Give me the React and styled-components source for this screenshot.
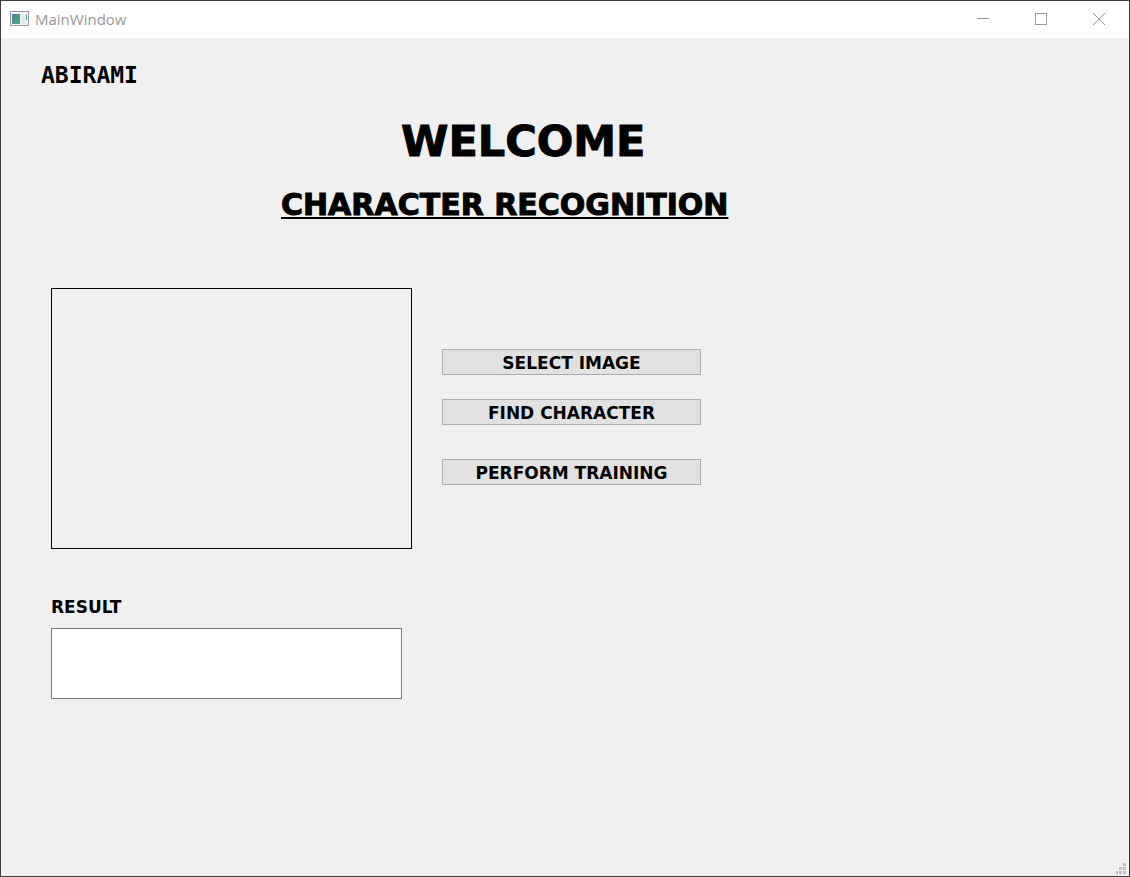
import React from "react";
import styled, { createGlobalStyle } from "styled-components";

const GlobalStyle = createGlobalStyle`
  *, *::before, *::after { box-sizing: border-box; }
  body { margin: 0; background: #f0f0f0; color: #000; }
`;

const heavy = `
  font-family: "Arial Black", "DejaVu Sans", sans-serif;
  font-weight: 900;
`;

const Window = styled.div`
  min-height: 100vh;
  display: flex;
  flex-direction: column;
  border: 1px solid #3f3d42;
  background: #f0f0f0;
`;

const TitleBar = styled.header`
  display: flex;
  align-items: center;
  height: 37px;
  padding: 0 1px 0 9px;
  background: #fff;
`;

const TitleText = styled.span`
  flex: 1;
  margin-left: 5px;
  padding-bottom: 2px;
  font: 15px/20px "Segoe UI", "Open Sans", "Noto Sans", sans-serif;
  color: #999;
`;

const CaptionButton = styled.button`
  display: flex;
  align-items: center;
  justify-content: center;
  width: 58px;
  height: 37px;
  padding: 0 1px 1px 0;
  border: 0;
  background: transparent;
  color: #999;
`;

const Content = styled.main`
  flex: 1;
  padding: 24px 40px 0;
`;

const Author = styled.p`
  margin: 0;
  font: 700 23px/26px "Comic Sans MS", "DejaVu Sans Mono", monospace;
`;

const Headings = styled.div`
  display: flex;
  flex-direction: column;
  align-items: flex-start;
  margin-top: 25px;
`;

const Welcome = styled.h1`
  ${heavy}
  margin: 0 0 0 360px;
  font-size: 43px;
  line-height: 56px;
  -webkit-text-stroke: 1px #000;
`;

const Subtitle = styled.h2`
  ${heavy}
  margin: 16px 0 0 240px;
  font-size: 30px;
  line-height: 40px;
  -webkit-text-stroke: 1px #000;
  text-decoration: underline;
  text-decoration-thickness: 2px;
  text-decoration-skip-ink: none;
  text-underline-offset: 2px;
`;

const Workspace = styled.section`
  display: flex;
  gap: 30px;
  margin: 63px 0 0 10px;
`;

const Preview = styled.div`
  width: 361px;
  height: 261px;
  border: 1px solid #000;
`;

const Actions = styled.div`
  display: flex;
  flex-direction: column;
  gap: 24px;
  width: 259px;
  padding-top: 61px;
`;

const ActionButton = styled.button`
  ${heavy}
  height: 26px;
  margin-top: ${(p) => (p.$separated ? "10px" : "0")};
  padding: 2px 0 0;
  border: 1px solid #adadad;
  background: #e1e1e1;
  color: #000;
  font-size: 17px;
  line-height: 22px;
`;

const ResultField = styled.div`
  display: flex;
  flex-direction: column;
  align-items: flex-start;
  gap: 9px;
  margin: 46px 0 0 10px;
`;

const ResultLabel = styled.label`
  ${heavy}
  font-size: 17px;
  line-height: 24px;
`;

const ResultBox = styled.textarea`
  display: block;
  width: 351px;
  height: 71px;
  padding: 4px;
  border: 1px solid #7a7a7a;
  border-radius: 0;
  background: #fff;
  font: 16px/20px "Liberation Sans", sans-serif;
  resize: none;
`;

const StatusBar = styled.footer`
  display: flex;
  justify-content: flex-end;
  padding: 0 3px 2px 0;
`;

const AppIcon = () => (
  <svg width="20" height="17" viewBox="0 0 20 17" aria-hidden="true">
    <defs>
      <linearGradient id="pane" x1="0" y1="0" x2="1" y2="1">
        <stop offset="0" stopColor="#4a7fa5" />
        <stop offset="1" stopColor="#55a878" />
      </linearGradient>
    </defs>
    <rect x="0.5" y="0.5" width="18" height="14" fill="#f4f4f4" stroke="#949a9e" />
    <rect x="2" y="3" width="8" height="10" fill="url(#pane)" />
    <rect x="11" y="3" width="4" height="10" fill="#e6e9eb" />
    <rect x="16" y="3" width="1" height="6" fill="#58a590" />
  </svg>
);

const shapes = {
  Minimize: <path d="M0 5.5h12" />,
  Maximize: <rect x="0.5" y="0.5" width="11" height="11" />,
  Close: <path d="M0 0l12 12M12 0L0 12" />,
};

const SizeGrip = () => (
  <svg width="10" height="11" viewBox="1 0 10 11" fill="#bfbfbf" aria-hidden="true">
    {[[8, 0], [4, 4], [8, 4], [0, 8], [4, 8], [8, 8]].map(([x, y]) => (
      <rect key={`${x}-${y}`} x={x} y={y} width="3" height="3" />
    ))}
  </svg>
);

export default function App() {
  return (
    <Window>
      <GlobalStyle />
      <TitleBar>
        <AppIcon />
        <TitleText>MainWindow</TitleText>
        {Object.entries(shapes).map(([name, shape]) => (
          <CaptionButton key={name} type="button" aria-label={name}>
            <svg width="12" height="12" viewBox="0 0 12 12" fill="none" stroke="currentColor">
              {shape}
            </svg>
          </CaptionButton>
        ))}
      </TitleBar>
      <Content>
        <Author>ABIRAMI</Author>
        <Headings>
          <Welcome>WELCOME</Welcome>
          <Subtitle>CHARACTER RECOGNITION</Subtitle>
        </Headings>
        <Workspace>
          <Preview />
          <Actions>
            <ActionButton type="button">SELECT IMAGE</ActionButton>
            <ActionButton type="button">FIND CHARACTER</ActionButton>
            <ActionButton type="button" $separated>PERFORM TRAINING</ActionButton>
          </Actions>
        </Workspace>
        <ResultField>
          <ResultLabel htmlFor="result">RESULT</ResultLabel>
          <ResultBox id="result" />
        </ResultField>
      </Content>
      <StatusBar>
        <SizeGrip />
      </StatusBar>
    </Window>
  );
}
